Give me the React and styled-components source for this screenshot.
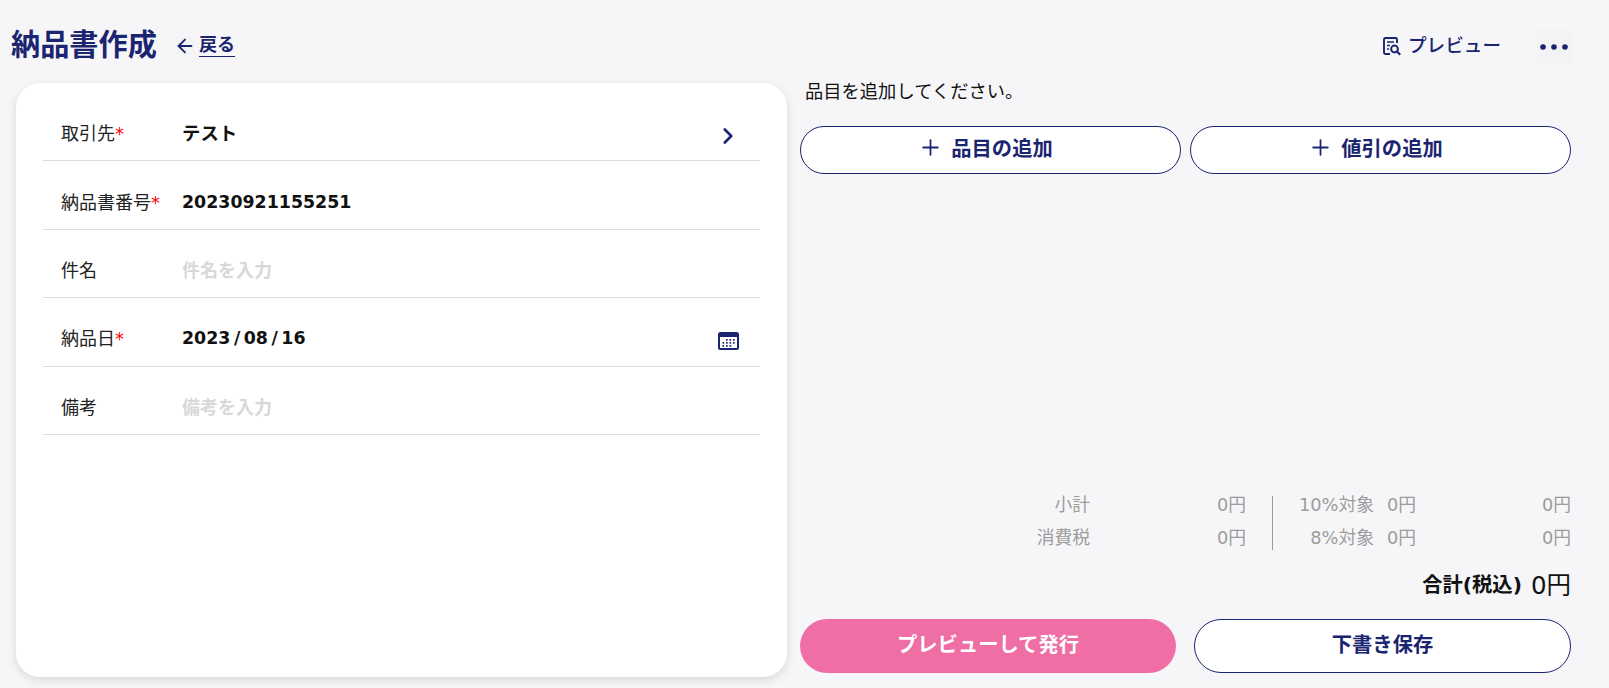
import React from 'react'
import styled, { createGlobalStyle } from 'styled-components'
import { ArrowLeft, ChevronRight, Plus } from 'lucide-react'

const navy = '#1b2470'

// GLOBAL
const GlobalStyle = createGlobalStyle`
  html, body {
    margin: 0;
    padding: 0;
    background: #f6f6f9;
  }
  body {
    font-family: "DejaVu Sans", "Noto Sans CJK JP", sans-serif;
    font-size: 18px;
    color: #111;
  }
  * { box-sizing: border-box; }
`

// HEADER
const Page = styled.div`
  width: 1609px;
  height: 688px;
  overflow: hidden;
  padding: 0 38px 0 0;
  display: flex;
  flex-direction: column;
`

const Header = styled.header`
  height: 83px;
  padding: 24px 0 0 11px;
  display: flex;
  align-items: flex-start;
  justify-content: space-between;
`

const TitleGroup = styled.div`
  display: flex;
  align-items: center;
`

const Title = styled.h1`
  margin: 0;
  padding-bottom: 4px;
  font-size: 29.2px;
  line-height: 36px;
  font-weight: 700;
  color: ${navy};
  font-family: "Noto Sans CJK JP", sans-serif;
`

const BackLink = styled.a`
  margin-left: 19px;
  display: flex;
  align-items: center;
  gap: 5px;
  color: ${navy};
`

const ArrowBox = styled.span`
  width: 18px;
  height: 18px;
  display: flex;
  align-items: center;
  justify-content: center;
  background: #f3f3f6;
  margin-top: 4px;
`

const BackText = styled.span`
  font-size: 18px;
  font-weight: 700;
  line-height: 25px;
  border-bottom: 1px solid ${navy};
  font-family: "Noto Sans CJK JP", sans-serif;
`

const HeaderActions = styled.div`
  display: flex;
  align-items: flex-start;
  gap: 36px;
  padding-top: 6px;
`

const PreviewLink = styled.a`
  display: flex;
  align-items: center;
  gap: 6px;
  height: 26px;
  font-size: 18.6px;
  font-weight: 500;
  color: ${navy};
  font-family: "Noto Sans CJK JP", sans-serif;
`

const PreviewIcon = styled.span`
  display: flex;
  margin-top: 6px;
`

const MenuButton = styled.div`
  width: 34px;
  height: 34px;
  display: flex;
  align-items: center;
  justify-content: center;
  background: #f3f3f6;
`

// BODY
const Columns = styled.main`
  flex: 1;
  display: flex;
  gap: 13px;
  padding-left: 16px;
  padding-bottom: 11px;
`

const Card = styled.section`
  width: 771px;
  background: #fff;
  border-radius: 24px;
  box-shadow: 0 3px 10px rgba(0, 0, 0, 0.12);
  padding: 10px 27px 0;
`

const Row = styled.div`
  height: 68.4px;
  display: flex;
  align-items: center;
  border-bottom: 1px solid #dcdcdc;
  padding: 11px 22px 0 18px;
`

const Label = styled.div`
  width: 121px;
  font-family: "Noto Sans CJK JP", sans-serif;
  font-size: 18px;
  color: #222;
`

const Required = styled.span`
  color: #f00;
  font-family: "DejaVu Sans", sans-serif;
`

const Value = styled.div`
  flex: 1;
  font-weight: 700;
  font-size: ${p => (p.$latin ? 17.4 : p.$placeholder ? 18 : 18.4)}px;
  padding-top: ${p => (p.$latin ? 2 : 0)}px;
  color: ${p => (p.$placeholder ? '#d8d8d8' : '#111')};
  font-family: ${p => (p.$latin ? '"DejaVu Sans", sans-serif' : '"Noto Sans CJK JP", sans-serif')};
`

const DateSlash = styled.span`
  padding: 0 3.5px;
`

const RowIcon = styled.span`
  display: flex;
  margin: 7px ${p => p.$right || 0}px 0 0;
`

const Side = styled.section`
  flex: 1;
  display: flex;
  flex-direction: column;
  padding-bottom: 4px;
`

const Hint = styled.p`
  margin: 0 0 0 5px;
  font-family: "Noto Sans CJK JP", sans-serif;
  font-size: 18.3px;
  line-height: 14px;
`

const ButtonRow = styled.div`
  display: flex;
  justify-content: space-between;
  margin-top: ${p => p.$top || 0}px;
`

const PillButton = styled.button`
  width: ${p => p.$width}px;
  height: ${p => p.$height}px;
  border-radius: 999px;
  border: ${p => (p.$primary ? 'none' : `1px solid ${navy}`)};
  background: ${p => (p.$primary ? '#ee6ea5' : '#fff')};
  color: ${p => (p.$primary ? '#fff' : navy)};
  font-family: "Noto Sans CJK JP", sans-serif;
  font-size: 20.3px;
  font-weight: 700;
  display: flex;
  align-items: center;
  justify-content: center;
  gap: 8px;
  padding: 0 ${p => p.$shift || 0}px 6px 0;
`

const Summary = styled.div`
  margin-top: auto;
  display: flex;
  justify-content: flex-end;
  color: #9c9c9c;
  font-size: 17.8px;
`

const SummaryLeft = styled.div`
  display: grid;
  grid-template-columns: 90px 156px;
  padding-right: 26px;
  border-right: 1px solid #9c9c9c;
  height: 54px;
`

const SummaryRight = styled.div`
  display: grid;
  grid-template-columns: 101px 42px 155px;
  height: 54px;
`

const Cell = styled.div`
  text-align: right;
  height: 33px;
  line-height: 18px;
`

const Total = styled.div`
  margin-top: 17px;
  display: flex;
  justify-content: flex-end;
  align-items: center;
  gap: 9px;
  height: 32px;
`

const TotalLabel = styled.span`
  font-size: 20.3px;
  font-weight: 700;
`

const TotalValue = styled.span`
  font-size: 24.5px;
`

// ICONS
const DocIcon = () => (
  <svg width="20" height="20" viewBox="0 0 20 20" fill="none" stroke={navy} strokeWidth="1.9">
    <path d="M8 18H3.5A1.5 1.5 0 0 1 2 16.5v-13A1.5 1.5 0 0 1 3.5 2h10A1.5 1.5 0 0 1 15 3.5V7" />
    <path d="M5 6h7M5 9.5h3M5 13h2" strokeWidth="1.6" />
    <circle cx="12.5" cy="13" r="3.4" strokeWidth="2" />
    <path d="M15 15.5l3.2 3.2" strokeWidth="2.2" />
  </svg>
)

const calendarDots = [
  [8, 7], [11.5, 7], [15, 7],
  [4.5, 10], [8, 10], [11.5, 10], [15, 10],
  [4.5, 13], [8, 13], [11.5, 13],
]

const CalendarIcon = () => (
  <svg width="21" height="18" viewBox="0 0 21 18">
    <rect width="21" height="18" rx="2.5" fill={navy} />
    <rect x="2" y="5" width="17" height="11" fill="#fff" />
    {calendarDots.map(([x, y]) => (
      <rect key={`${x}-${y}`} x={x} y={y} width="1.7" height="1.7" fill={navy} />
    ))}
  </svg>
)

const DotsIcon = () => (
  <svg width="30" height="8" viewBox="0 0 30 8" fill={navy}>
    <circle cx="4" cy="4" r="2.8" />
    <circle cx="15" cy="4" r="2.8" />
    <circle cx="26" cy="4" r="2.8" />
  </svg>
)

export default function App() {
  return (
    <Page>
      <GlobalStyle />
      <Header>
        <TitleGroup>
          <Title>納品書作成</Title>
          <BackLink>
            <ArrowBox>
              <ArrowLeft size={22} color={navy} strokeWidth={2} style={{ flexShrink: 0 }} />
            </ArrowBox>
            <BackText>戻る</BackText>
          </BackLink>
        </TitleGroup>
        <HeaderActions>
          <PreviewLink>
            <PreviewIcon><DocIcon /></PreviewIcon>
            プレビュー
          </PreviewLink>
          <MenuButton>
            <DotsIcon />
          </MenuButton>
        </HeaderActions>
      </Header>

      <Columns>
        <Card>
          <Row>
            <Label>取引先<Required>*</Required></Label>
            <Value>テスト</Value>
            <RowIcon $right={-3}><ChevronRight size={26} color={navy} strokeWidth={2.4} /></RowIcon>
          </Row>
          <Row>
            <Label>納品書番号<Required>*</Required></Label>
            <Value $latin>20230921155251</Value>
          </Row>
          <Row>
            <Label>件名</Label>
            <Value $placeholder>件名を入力</Value>
          </Row>
          <Row>
            <Label>納品日<Required>*</Required></Label>
            <Value $latin>2023<DateSlash>/</DateSlash>08<DateSlash>/</DateSlash>16</Value>
            <RowIcon $right={-1}><CalendarIcon /></RowIcon>
          </Row>
          <Row>
            <Label>備考</Label>
            <Value $placeholder>備考を入力</Value>
          </Row>
        </Card>

        <Side>
          <Hint>品目を追加してください。</Hint>
          <ButtonRow $top={29}>
            <PillButton $width={381} $height={48} $shift={10}>
              <Plus size={25} strokeWidth={1.7} />
              品目の追加
            </PillButton>
            <PillButton $width={381} $height={48} $shift={10}>
              <Plus size={25} strokeWidth={1.7} />
              値引の追加
            </PillButton>
          </ButtonRow>

          <Summary>
            <SummaryLeft>
              <Cell>小計</Cell>
              <Cell>0円</Cell>
              <Cell>消費税</Cell>
              <Cell>0円</Cell>
            </SummaryLeft>
            <SummaryRight>
              <Cell>10%対象</Cell>
              <Cell>0円</Cell>
              <Cell>0円</Cell>
              <Cell>8%対象</Cell>
              <Cell>0円</Cell>
              <Cell>0円</Cell>
            </SummaryRight>
          </Summary>

          <Total>
            <TotalLabel>合計(税込)</TotalLabel>
            <TotalValue>0円</TotalValue>
          </Total>

          <ButtonRow $top={20}>
            <PillButton $primary $width={376} $height={54}>プレビューして発行</PillButton>
            <PillButton $width={377} $height={54}>下書き保存</PillButton>
          </ButtonRow>
        </Side>
      </Columns>
    </Page>
  )
}
